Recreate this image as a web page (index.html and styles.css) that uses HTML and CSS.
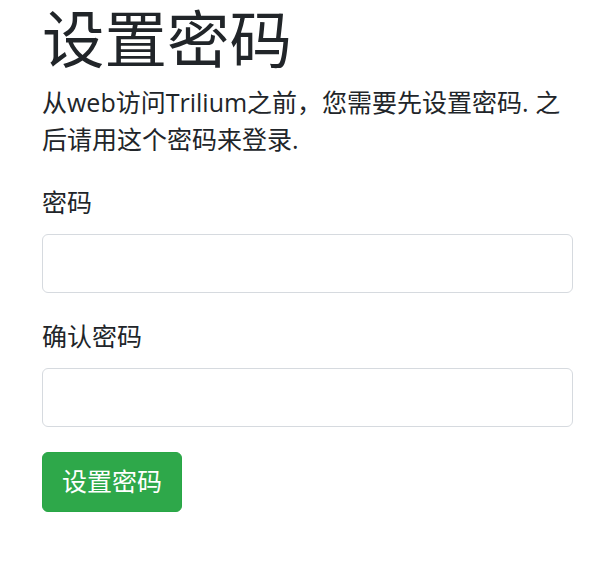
FILE: index.html
```html
<!DOCTYPE html>
<html lang="zh-CN">
<head>
<meta charset="utf-8">
<title>设置密码</title>
<link rel="stylesheet" href="styles.css">
</head>
<body>
<div class="page">
  <h1 class="title">设置密码</h1>
  <p class="intro">从web访问Trilium之前，您需要先设置密码. 之后请用这个密码来登录.</p>
  <form class="form">
    <div class="group">
      <label class="label" for="password">密码</label>
      <input class="control" id="password" type="password">
    </div>
    <div class="group">
      <label class="label" for="password2">确认密码</label>
      <input class="control" id="password2" type="password">
    </div>
    <button class="btn" type="button">设置密码</button>
  </form>
</div>
</body>
</html>
```

FILE: styles.css
```css
* { box-sizing: border-box; }
html, body {
  margin: 0;
  background: #fff;
}
body {
  font-family: "Open Sans", "Noto Sans CJK SC", sans-serif;
  font-size: 25px;
  line-height: 1.5;
  color: #212529;
}
.page {
  width: 531px;
  margin-left: 42px;
}
.title {
  margin: 0 0 12.5px 0;
  font-size: 62.5px;
  font-weight: 400;
  line-height: 71px;
  font-family: "Noto Sans CJK SC", sans-serif;
}
.intro {
  margin: 0 0 25px 0;
}
.form {
  display: flex;
  flex-direction: column;
  align-items: flex-start;
}
.group {
  display: flex;
  flex-direction: column;
  width: 100%;
  margin-bottom: 25px;
}
.label {
  margin-bottom: 12.5px;
}
.control {
  width: 100%;
  height: 59px;
  border: 1.5px solid #d6dadf;
  border-radius: 6px;
  background: #fff;
  font: inherit;
}
.btn {
  height: 60px;
  padding: 0 19px;
  border: 1.5px solid #28a745;
  border-radius: 6px;
  background: #2ea84a;
  color: #fff;
  font: inherit;
  line-height: 1.5;
}
```
